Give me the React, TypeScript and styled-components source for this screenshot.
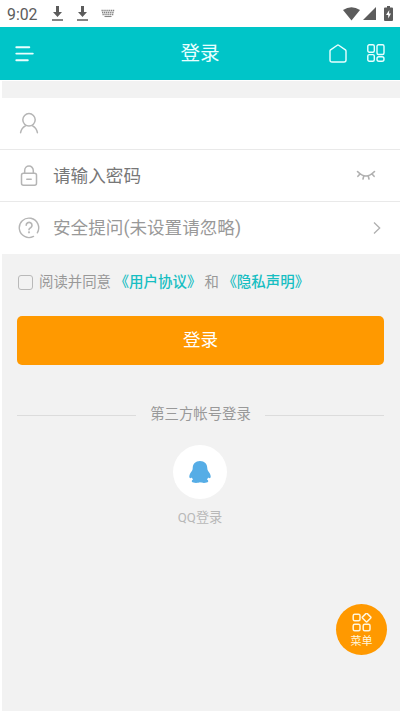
import React from 'react';
import styled, { createGlobalStyle } from 'styled-components';

const GlobalStyle = createGlobalStyle`
  * { box-sizing: border-box; }
  body { margin: 0; background: #fff; }
  button { border: 0; padding: 0; background: none; font: inherit; color: inherit; }
`;

const Screen = styled.main`
  display: flex;
  flex-direction: column;
  width: 400px;
  height: 711px;
  overflow: hidden;
  position: relative;
  background: #fff;
  font-family: Roboto, 'Noto Sans CJK SC', sans-serif;
  svg { display: block; flex: none; }
`;

const StatusBar = styled.header`
  display: flex;
  align-items: center;
  height: 27px;
  padding: 0 7px;
  color: #5c5c5c;
`;

const Clock = styled.time`
  width: 45px;
  font-size: 15.8px;
  line-height: 27px;
  padding-top: 1px;
`;

const Notices = styled.div`
  display: flex;
  align-items: center;
  gap: 13.500px;
  flex: 1;
`;

const Signals = styled.div`
  display: flex;
  align-items: center;
  gap: 3px;
  svg:last-child { margin-left: 5px; }
`;

const NavBar = styled.nav`
  display: grid;
  grid-template-columns: 1fr auto 1fr;
  align-items: center;
  height: 53px;
  padding: 0 15px;
  background: #00c5c8;
  color: #e9ffff;
`;

const Title = styled.h1`
  margin: 0;
  font-size: 19.6px;
  font-weight: 400;
  line-height: 28px;
`;

const NavActions = styled.div`
  display: flex;
  justify-content: flex-end;
  gap: 20px;
`;

const Content = styled.section`
  flex: 1;
  margin: 1px 0 0 2px;
  padding-top: 17px;
  background: #f2f2f2;
`;

const Fields = styled.div`
  background: #fff;
  margin-left: -2px;
`;

const FieldRow = styled.div<{ $color?: string; $height: number; $divided?: boolean }>`
  display: flex;
  align-items: center;
  height: ${(p) => p.$height}px;
  padding: 0 19px 0 18px;
  border-bottom: ${(p) => (p.$divided ? '1px solid #e9e9e9' : '0')};
  color: ${(p) => p.$color ?? '#777'};
  font-size: 17.6px;
  line-height: 26px;
`;

const FieldIcon = styled.span`
  width: 35px;
  color: #b5b5b5;
`;

const FieldLabel = styled.span`
  flex: 1;
  white-space: nowrap;
`;

const Trailing = styled.span<{ $inset?: number }>`
  margin-right: ${(p) => p.$inset ?? 0}px;
  color: #b0b0b0;
`;

const Agreement = styled.div`
  display: flex;
  align-items: center;
  height: 62px;
  padding: 0 0 5px 16px;
  font-size: 14.4px;
  line-height: 22px;
  color: #999;
  white-space: nowrap;
`;

const Checkbox = styled.span`
  width: 15px;
  height: 15px;
  margin-right: 6px;
  border: 1px solid #b9b9b9;
  border-radius: 3px;
`;

const Link = styled.a<{ $before: number; $after?: number }>`
  color: #17bec2;
  font-size: 14.5px;
  font-weight: 500;
  margin: 0 ${(p) => p.$after ?? 0}px 0 ${(p) => p.$before}px;
`;

const LoginButton = styled.button`
  display: block;
  width: 367px;
  height: 49px;
  margin-left: 15px;
  border-radius: 5px;
  background: #ff9900;
  color: #fff;
  font-size: 17.6px;
  line-height: 49px;
`;

const Divider = styled.div`
  display: flex;
  align-items: center;
  gap: 14px;
  margin: 39px 16px 0 15px;
  color: #999;
  font-size: 14.4px;
  line-height: 22px;
  &::before, &::after {
    content: '';
    flex: 1;
    height: 1px;
    background: #dcdcdc;
  }
`;

const SocialLogin = styled.div`
  display: flex;
  flex-direction: column;
  align-items: center;
  margin: 19px 2px 0 0;
  color: #b8b8b8;
  font-size: 13.2px;
  line-height: 20px;
`;

const SocialBadge = styled.span`
  display: flex;
  align-items: center;
  justify-content: center;
  width: 54px;
  height: 54px;
  margin-bottom: 9px;
  padding-bottom: 1px;
  border-radius: 50%;
  background: #fff;
`;

const FloatingMenu = styled.button`
  position: absolute;
  right: 13px;
  bottom: 56px;
  display: flex;
  flex-direction: column;
  align-items: center;
  gap: 2px;
  width: 51px;
  height: 51px;
  padding-top: 9px;
  border-radius: 50%;
  background: #ff9900;
  color: #fff6dc;
  font-size: 11px;
  line-height: 16px;
`;

const DownloadIcon = () => (
  <svg width="11" height="15" viewBox="0 0 11 15" fill="currentColor">
    <path d="M4 0h3v6h3l-4.500 5L1 6h3zM0 13.300h11v1.400H0z" />
  </svg>
);

const KeyboardIcon = () => (
  <svg width="14" height="9" viewBox="0 0 14 9" fill="none" stroke="currentColor" opacity=".75">
    <path d="M.5 1.500h13M1 3.500h12M1.500 5.500h11" strokeWidth="1.300" strokeDasharray="1.300 .6" />
    <path d="M3.500 7.500h7" strokeWidth="1.100" />
  </svg>
);

const WifiIcon = () => (
  <svg width="17" height="14" viewBox="0 0 17 14" fill="currentColor">
    <path d="M0 3Q8.500-2.600 17 3L8.500 13.500z" />
  </svg>
);

const CellIcon = () => (
  <svg width="13" height="13" viewBox="0 0 13 13" fill="currentColor">
    <path d="M13 0v13H0z" />
  </svg>
);

const BatteryIcon = () => (
  <svg width="9" height="15" viewBox="0 0 9 15">
    <path d="M3 0h3v1.500h2q1 0 1 1V14q0 1-1 1H1q-1 0-1-1V2.500q0-1 1-1h2z" fill="currentColor" />
    <path d="M5.300 4L2 9h2.200v3.500L7 7.500H5z" fill="#fff" />
  </svg>
);

const ListIcon = () => (
  <svg width="19" height="16" viewBox="0 0 19 16" fill="none" stroke="currentColor" strokeWidth="1.900" strokeLinecap="round">
    <path d="M1.300 1.200h13M1.300 7.600h16.500M1.300 14.200h11.500" />
  </svg>
);

const HomeIcon = () => (
  <svg width="18" height="19" viewBox="0 0 18 19" fill="none" stroke="currentColor" strokeWidth="1.400" strokeLinejoin="round">
    <path d="M1 7Q1 6.400 1.600 5.900L8.300 1.200Q9 .7 9.700 1.200L16.400 5.900Q17 6.400 17 7V16Q17 18 15 18H3Q1 18 1 16z" />
  </svg>
);

const GridIcon = () => (
  <svg width="18" height="18" viewBox="0 0 18 18" fill="none" stroke="currentColor" strokeWidth="1.400">
    <rect x=".8" y=".8" width="6.500" height="7.400" rx="1.500" />
    <rect x="10" y=".8" width="7" height="9.700" rx="1.500" />
    <rect x=".8" y="10.600" width="6.500" height="6.600" rx="1.500" />
    <rect x="10" y="12.800" width="7" height="4.400" rx="1.900" />
  </svg>
);

const UserIcon = () => (
  <svg width="21" height="24" viewBox="0 0 21 24" fill="none" stroke="currentColor" strokeWidth="1.500" strokeLinecap="round">
    <circle cx="11" cy="7.800" r="6.200" />
    <path d="M2.600 20.700Q3.400 16.100 7.400 13.900M14.600 13.900Q18.600 16.100 19.400 20.700" />
  </svg>
);

const LockIcon = () => (
  <svg width="21" height="22" viewBox="0 0 21 22" fill="none" stroke="currentColor" strokeWidth="1.500" strokeLinecap="round">
    <rect x="3.500" y="8.200" width="15" height="12" rx="2" />
    <path d="M6.700 8V5.400a4.300 4.300 0 0 1 8.600 0V8M8.800 14.200h4.400" />
  </svg>
);

const HelpIcon = () => (
  <svg width="22" height="22" viewBox="0 0 22 22" fill="none" stroke="currentColor" strokeWidth="1.400" strokeLinecap="round">
    <path d="M15.500 19.400A9.700 9.700 0 1 1 19.300 15.800" />
    <path d="M8.200 8.300a2.900 2.900 0 1 1 4.400 2.500Q11 11.600 11 12.800" strokeWidth="1.600" />
    <circle cx="11" cy="15.300" r=".4" />
  </svg>
);

const ClosedEyeIcon = () => (
  <svg width="24" height="12" viewBox="0 0 24 12" fill="none" stroke="currentColor" strokeWidth="1.600" strokeLinecap="round">
    <path d="M3.500 1.500Q12 10.500 20.500 1.500M6 4L3.900 6.300M9.700 6.100L9 9M14.300 6.100L15 9M18 4L20.100 6.300" />
  </svg>
);

const ChevronIcon = () => (
  <svg width="8" height="14" viewBox="0 0 8 14" fill="none" stroke="currentColor" strokeWidth="1.300">
    <path d="M1 1.500L6.700 7L1 12.500" />
  </svg>
);

const PenguinIcon = () => (
  <svg width="22" height="22" viewBox="0 0 22 22" fill="#56ade6">
    <path d="M11 0C6.500 0 3.700 2.900 3.700 7.200C3.700 9.300 2.400 10.500 1.300 12.300C.2 14.200-.1 16.500.9 17.100C1.700 17.400 2.300 16.900 2.900 16.500C3.100 17.300 3.500 18 4 18.500C2.900 19 2.500 19.800 2.900 20.800C3.700 22.200 9.100 22.100 11 21.300C12.900 22.100 18.300 22.200 19.100 20.800C19.500 19.800 19.100 19 18 18.500C18.500 18 18.900 17.300 19.100 16.500C19.700 16.900 20.300 17.400 21.100 17.100C22.100 16.500 21.800 14.200 20.700 12.300C19.600 10.500 18.300 9.300 18.300 7.200C18.300 2.900 15.500 0 11 0Z" />
  </svg>
);

const MenuIcon = () => (
  <svg width="20" height="19" viewBox="0 0 20 19" fill="none" stroke="currentColor" strokeWidth="1.500">
    <rect x="1.200" y="1.200" width="6.800" height="6.600" rx="1.500" />
    <rect x="1.200" y="11.200" width="6.800" height="6.600" rx="1.500" />
    <rect x="11.200" y="11.200" width="6.800" height="6.600" rx="1.500" />
    <rect x="11.300" y="1.300" width="6.600" height="6.600" rx="1" transform="rotate(45 14.600 4.600)" />
  </svg>
);

export default function App() {
  return (
    <>
      <GlobalStyle />
      <Screen>
        <StatusBar>
          <Clock>9:02</Clock>
          <Notices>
            <DownloadIcon />
            <DownloadIcon />
            <KeyboardIcon />
          </Notices>
          <Signals>
            <WifiIcon />
            <CellIcon />
            <BatteryIcon />
          </Signals>
        </StatusBar>
        <NavBar>
          <ListIcon />
          <Title>登录</Title>
          <NavActions>
            <HomeIcon />
            <GridIcon />
          </NavActions>
        </NavBar>
        <Content>
          <Fields>
            <FieldRow $height={52} $divided>
              <FieldIcon><UserIcon /></FieldIcon>
            </FieldRow>
            <FieldRow $height={52} $divided>
              <FieldIcon><LockIcon /></FieldIcon>
              <FieldLabel>请输入密码</FieldLabel>
              <Trailing $inset={3}><ClosedEyeIcon /></Trailing>
            </FieldRow>
            <FieldRow $height={52} $color="#999">
              <FieldIcon><HelpIcon /></FieldIcon>
              <FieldLabel>安全提问(未设置请忽略)</FieldLabel>
              <Trailing><ChevronIcon /></Trailing>
            </FieldRow>
          </Fields>
          <Agreement>
            <Checkbox />
            阅读并同意
            <Link $before={3.5} $after={3}>《用户协议》</Link>
            和
            <Link $before={3.5}>《隐私声明》</Link>
          </Agreement>
          <LoginButton>登录</LoginButton>
          <Divider>第三方帐号登录</Divider>
          <SocialLogin>
            <SocialBadge><PenguinIcon /></SocialBadge>
            QQ登录
          </SocialLogin>
        </Content>
        <FloatingMenu>
          <MenuIcon />
          菜单
        </FloatingMenu>
      </Screen>
    </>
  );
}
